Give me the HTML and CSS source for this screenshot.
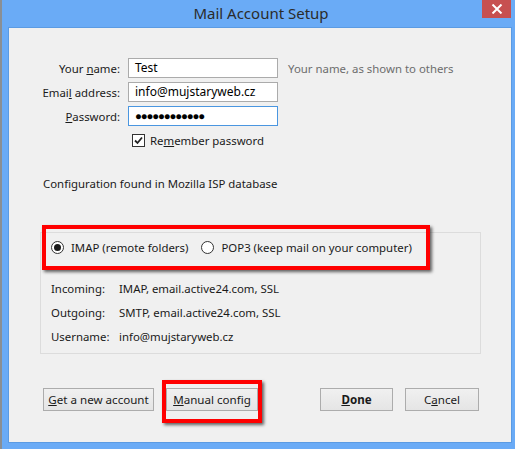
FILE: index.html
```html
<!DOCTYPE html>
<html>
<head>
<meta charset="utf-8">
<link rel="stylesheet" href="styles.css">
</head>
<body>
<div class="desk"></div>
<div class="window">
  <div class="titlebar">
    <span class="title">Mail Account Setup</span>
    <span class="close">
      <svg width="12" height="10" viewBox="0 0 12 10"><path d="M1.5 0.5 L10.5 9.5 M10.5 0.5 L1.5 9.5" stroke="#fff" stroke-width="2"/></svg>
    </span>
  </div>
  <div class="client">
    <div class="form">
      <label class="lbl">Your <u>n</u>ame:</label>
      <div class="input">Test</div>
      <span class="hint">Your name, as shown to others</span>
      <label class="lbl">Emai<u>l</u> address:</label>
      <div class="input">info@mujstaryweb.cz</div>
      <span></span>
      <label class="lbl"><u>P</u>assword:</label>
      <div class="input focus"><span class="dots">●●●●●●●●●●●●</span></div>
      <span></span>
      <span></span>
      <div class="check">
        <span class="box"><svg width="11" height="11" viewBox="0 0 11 11"><path d="M2 5.5 L4.5 8 L9 2.5" stroke="#222" stroke-width="1.8" fill="none"/></svg></span>
        <span>Re<u>m</u>ember password</span>
      </div>
      <span></span>
    </div>
    <p class="found">Configuration found in Mozilla ISP database</p>
    <div class="group">
      <div class="protos">
        <div class="highlight"></div>
        <span class="radio on"><span class="dot"></span></span>
        <span class="rlabel">IMAP (remote folders)</span>
        <span class="radio"></span>
        <span class="rlabel">POP3 (keep mail on your computer)</span>
      </div>
      <div class="info">
        <span class="k">Incoming:</span><span>IMAP, email.active24.com, SSL</span>
        <span class="k">Outgoing:</span><span>SMTP, email.active24.com, SSL</span>
        <span class="k">Username:</span><span>info@mujstaryweb.cz</span>
      </div>
    </div>
    <div class="buttons">
      <button class="btn get"><u>G</u>et a new account</button>
      <div class="manual-wrap">
        <div class="highlight2"></div>
        <button class="btn manual"><u>M</u>anual config</button>
      </div>
      <span class="spacer"></span>
      <button class="btn done"><b><u>D</u>one</b></button>
      <button class="btn cancel">C<u>a</u>ncel</button>
    </div>
  </div>
</div>
</body>
</html>
```
FILE: styles.css
```css
html, body {
  margin: 0;
  padding: 0;
  width: 515px;
  height: 449px;
  overflow: hidden;
  background: #6aabf6;
  font-family: "Noto Sans", "Open Sans", sans-serif;
  font-size: 11.4px;
  color: #1a1a1a;
}
.desk {
  position: absolute;
  left: 0;
  top: 0;
  width: 2px;
  height: 449px;
  background: #8a8f94;
}
.window {
  margin-left: 2px;
  width: 513px;
  height: 449px;
  display: flex;
  flex-direction: column;
  box-sizing: border-box;
  padding: 0 3px 6px 6px;
}
.titlebar {
  height: 27px;
  position: relative;
  display: flex;
  justify-content: center;
}
.title {
  font-size: 15px;
  color: #2b2b2b;
  line-height: 26px;
  padding-left: 2px;
}
.close {
  position: absolute;
  right: 1px;
  top: 0;
  width: 29px;
  height: 18px;
  background: #c75050;
  display: flex;
  align-items: center;
  justify-content: center;
}
.client {
  flex: 1;
  background: #f0f0f0;
  border: 1px solid #5b9be3;
  position: relative;
}
.form {
  display: grid;
  grid-template-columns: 111px 150px auto;
  column-gap: 8px;
  row-gap: 4px;
  margin-top: 30px;
  align-items: center;
}
.lbl {
  text-align: right;
  color: #1a1a1a;
}
.input {
  height: 20px;
  box-sizing: border-box;
  border: 1px solid #ababab;
  background: #fff;
  padding: 0 6px;
  line-height: 18px;
  color: #000;
  font-size: 12px;
}
.input.focus {
  border-color: #4a96e0;
}
.dots {
  font-size: 11.5px;
  letter-spacing: -1.2px;
  color: #000;
}
.hint {
  color: #6d6d6d;
  padding-left: 2px;
}
.check {
  display: flex;
  align-items: center;
  gap: 5px;
  padding-left: 4px;
  margin-top: 3px;
}
.box {
  width: 11px;
  height: 11px;
  border: 1px solid #333;
  background: #fff;
  display: flex;
}
.found {
  margin: 28px 0 0 34px;
  line-height: 16px;
}
.group {
  margin: 40px 0 0 31px;
  width: 441px;
  height: 122px;
  box-sizing: border-box;
  border: 1px solid #dcdcdc;
  position: relative;
}
.protos {
  display: flex;
  align-items: center;
  padding: 6px 0 0 10px;
  height: 16px;
  position: relative;
}
.highlight {
  position: absolute;
  left: 1px;
  top: -8px;
  width: 380px;
  height: 37px;
  border: 4px solid #f00;
  box-shadow: 2px 2px 3px rgba(0,0,0,0.6);
}
.radio {
  width: 11px;
  height: 11px;
  border: 1px solid #333;
  border-radius: 50%;
  background: #fff;
  display: flex;
  align-items: center;
  justify-content: center;
  margin-right: 7px;
}
.radio .dot {
  width: 7px;
  height: 7px;
  border-radius: 50%;
  background: #1a1a1a;
}
.rlabel {
  margin-right: 13px;
}
.info {
  display: grid;
  grid-template-columns: 68px auto;
  row-gap: 8px;
  margin: 26px 0 0 10px;
  line-height: 16px;
}
.k {
  color: #1a1a1a;
}
.buttons {
  display: flex;
  align-items: center;
  margin: 34px 0 0 34px;
  width: 436px;
}
.btn {
  height: 23px;
  box-sizing: border-box;
  border: 1px solid #acacac;
  background: linear-gradient(#f0f0f0, #e5e5e5);
  font-family: inherit;
  font-size: 11.6px;
  color: #1a1a1a;
  padding: 0;
}
.get { width: 111px; }
.manual-wrap {
  position: relative;
  margin-left: 12px;
}
.manual { width: 92px; }
.highlight2 {
  position: absolute;
  left: -4px;
  top: -8px;
  width: 92px;
  height: 35px;
  border: 4px solid #f00;
  box-shadow: 2px 2px 3px rgba(0,0,0,0.6);
}
.spacer { flex: 1; }
.done { width: 73px; }
.cancel { width: 74px; margin-left: 12px; }
```
